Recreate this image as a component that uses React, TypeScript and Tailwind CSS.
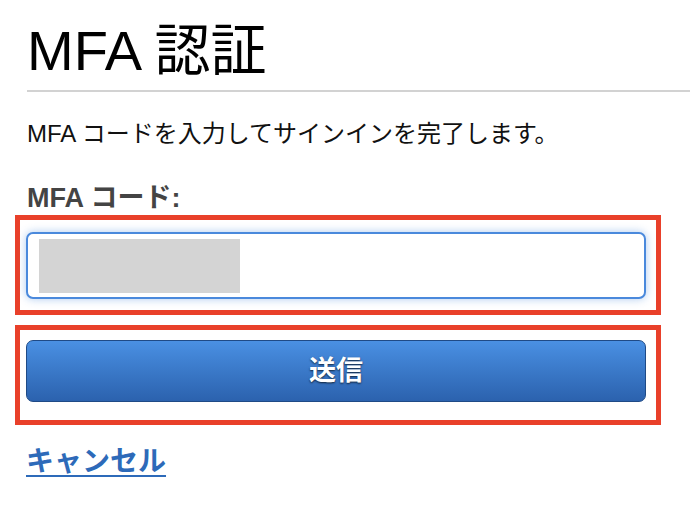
export default function App() {
  return (
    <div
      className="w-[690px] h-[520px] bg-white flex flex-col text-[#111]"
      style={{ fontFamily: '"Liberation Sans", "Noto Sans CJK JP", sans-serif' }}
    >
      {/* Title */}
      <h1 className="ml-[27px] mt-[23px] text-[56px] leading-[56px] font-normal text-black">
        MFA 認証
      </h1>
      <div className="ml-[27px] mt-[11px] h-[2px] bg-[#d2d2d2]" />

      <p className="ml-[27px] mt-[26px] text-[24px] leading-[32px] text-[#111]">
        MFA コードを入力してサインインを完了します。
      </p>

      <label className="ml-[27px] mt-[32px] text-[27px] leading-[32px] font-bold text-[#444]">
        MFA コード:
      </label>

      {/* Input (highlighted) */}
      <div className="ml-[15px] mt-[1px] w-[646px] h-[100px] border-[5px] border-[#e9402a] pl-[6px] pr-[10px] pt-[12px]">
        <div className="h-[67px] rounded-[7px] border-2 border-[#4a89dc] bg-white shadow-[0_0_8px_rgba(74,137,220,0.45)] flex items-center pl-[11px]">
          <div className="w-[201px] h-[54px] bg-[#d4d4d4]" />
        </div>
      </div>

      {/* Submit (highlighted) */}
      <div className="ml-[15px] mt-[10px] w-[646px] h-[100px] border-[5px] border-[#e9402a] pl-[6px] pr-[10px] pt-[10px]">
        <button className="w-full h-[62px] rounded-[7px] border border-[#1f4a86] bg-gradient-to-b from-[#4a90e3] to-[#2b62ae] text-white text-[27px] font-bold flex items-center justify-center [text-shadow:0_1px_2px_rgba(0,0,0,0.7)]">
          送信
        </button>
      </div>

      <a
        href="#"
        className="ml-[26px] mt-[19px] self-start text-[28px] leading-[36px] font-bold text-[#2d6ab9] underline decoration-2 underline-offset-[4px]"
      >
        キャンセル
      </a>
    </div>
  );
}
